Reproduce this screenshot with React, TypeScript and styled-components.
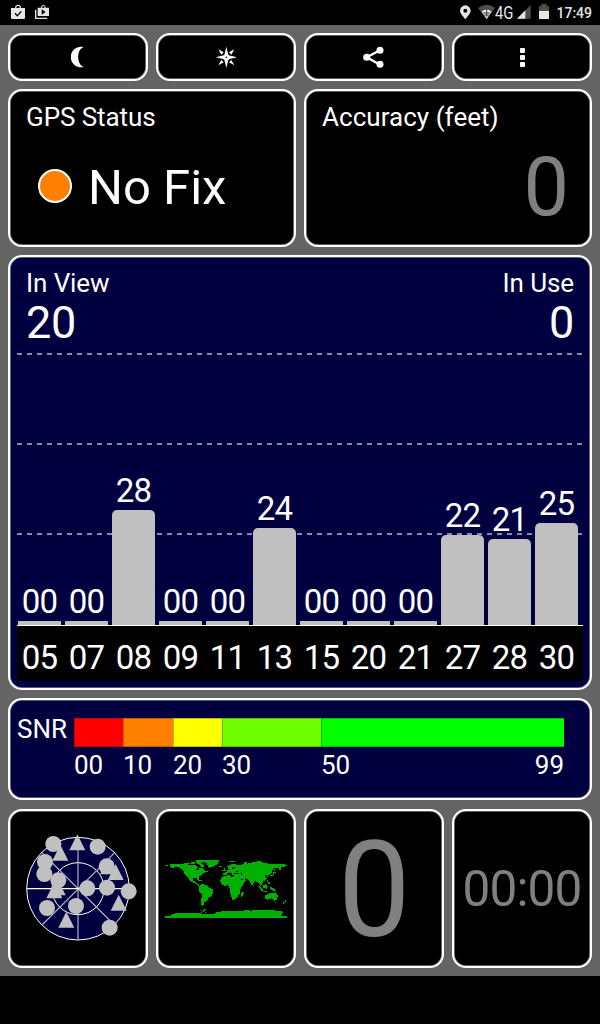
import React from "react";
import styled, { createGlobalStyle } from "styled-components";

const GlobalStyle = createGlobalStyle`
  * { box-sizing: border-box; }
  body { margin: 0; background: #000; font-family: Roboto, "Liberation Sans", sans-serif; color: #fff; }
`;

const Screen = styled.div`
  width: 600px;
  height: 1024px;
  background: #000;
  display: flex;
  flex-direction: column;
  overflow: hidden;
`;

const StatusBar = styled.header`
  height: 25px;
  flex: none;
  display: flex;
  justify-content: space-between;
  padding: 0 8px 0 11px;
`;

const StatusGroup = styled.div`
  display: flex;
  align-items: center;
`;

const StatusIcon = styled.svg<{ $gap?: number }>`
  display: block;
  flex: none;
  margin-left: ${(p) => p.$gap ?? 0}px;
`;

const Network = styled.span`
  display: block;
  width: 20px;
  font-size: 18.5px;
  line-height: 26px;
  color: #e6e6e6;
  transform: scaleX(0.8);
  transform-origin: left;
`;

const Clock = styled.span`
  margin-left: 7px;
  font-size: 14px;
  font-weight: 500;
  line-height: 25px;
  padding-top: 1px;
  color: #e6e6e6;
`;

const Dashboard = styled.main`
  height: 951px;
  background: #646464;
  padding: 8px;
  display: grid;
  grid-template-columns: repeat(4, 140px);
  grid-template-rows: 48px 158px 435px 102px 159px;
  column-gap: 8px;
  row-gap: 8px;
`;

const Panel = styled.section<{ $span?: number; $navy?: boolean }>`
  grid-column: span ${(p) => p.$span ?? 1};
  background: ${(p) => (p.$navy ? "#000040" : "#000")};
  border: 2px solid #fff;
  border-radius: 14px;
  box-shadow: inset 0 0 0 0.6px #b0b0b0;
  min-width: 0;
`;

const ToolButton = styled(Panel).attrs({ as: "button", type: "button" })`
  padding: 0;
  display: flex;
  align-items: center;
  justify-content: center;
`;

const InfoPanel = styled(Panel)`
  padding: 10px 16px;
`;

const Title = styled.div<{ $spacing?: number }>`
  font-size: 26px;
  line-height: 32px;
  letter-spacing: ${(p) => p.$spacing ?? -0.08}px;
  white-space: nowrap;
`;

const FixRow = styled.div`
  display: flex;
  align-items: center;
  margin: 25px 0 0 12px;
  height: 60px;
`;

const FixDot = styled.span`
  width: 34px;
  height: 34px;
  border: 2px solid #fff;
  border-radius: 50%;
  background: #ff8000;
  margin: -4px 16px 0 0;
`;

const FixText = styled.span`
  font-size: 49px;
  line-height: 60px;
`;

const AccuracyValue = styled.div`
  font-size: 81px;
  line-height: 90px;
  text-align: right;
  color: #808080;
  padding: 10px 5px 0 0;
`;

const ChartPanel = styled(Panel)`
  padding: 10px 7px 0;
`;

const ChartHead = styled.div`
  display: flex;
  justify-content: space-between;
  padding: 0 9px;
  height: 86px;
`;

const Stat = styled.div<{ $right?: boolean }>`
  text-align: ${(p) => (p.$right ? "right" : "left")};
`;

const StatValue = styled.div`
  font-size: 45px;
  line-height: 48px;
  letter-spacing: -0.3px;
`;

const dashes = "repeating-linear-gradient(90deg, #8888a8 0 5px, transparent 5px 10px)";

const Plot = styled.div`
  height: 273px;
  border-bottom: 1px solid #fff;
  display: flex;
  align-items: flex-end;
  gap: 4px;
  padding-left: 1px;
  background: ${dashes} 0 0 / 100% 2px no-repeat,
    ${dashes} 0 90px / 100% 2px no-repeat,
    ${dashes} 0 180px / 100% 2px no-repeat;
`;

const BarColumn = styled.div`
  width: 43px;
  flex: none;
  text-align: center;
  font-size: 33px;
  line-height: 38px;
  letter-spacing: -0.7px;
`;

const BarValue = styled.div`
  margin: 0 -4px;
`;

const Bar = styled.div<{ $empty: boolean }>`
  background: #c0c0c0;
  border-radius: ${(p) => (p.$empty ? "0" : "5px 5px 0 0")};
`;

const Axis = styled.div`
  height: 55px;
  background: #000;
  display: flex;
  gap: 4px;
  padding: 13px 0 0 1px;
`;

const SnrPanel = styled(Panel)`
  display: flex;
  padding: 18px 0 0 7px;
`;

const SnrLabel = styled.div`
  width: 57px;
  font-size: 26px;
  line-height: 23px;
`;

const SnrScale = styled.div`
  display: grid;
  grid-template-columns: 49px 50px 49px 99px 243px;
  align-content: start;
`;

const Swatch = styled.div<{ $color: string }>`
  height: 29px;
  background: ${(p) => p.$color};
  border: solid rgba(0, 0, 0, 0.25);
  border-width: 1px 0 1px 1px;
`;

const Tick = styled.div`
  display: flex;
  justify-content: space-between;
  font-size: 26px;
  line-height: 36px;
  white-space: nowrap;
`;

const Tile = styled(Panel)`
  height: 159px;
  margin-top: 1px;
  display: flex;
  align-items: center;
  justify-content: center;
`;

const SpeedValue = styled.div`
  font-size: 133px;
  line-height: 1;
  color: #808080;
  padding: 4px 0 0 1px;
  transform: scaleX(0.97);
`;

const TimeValue = styled.div`
  font-size: 49.5px;
  line-height: 1;
  letter-spacing: -0.9px;
  color: #808080;
  padding-top: 3px;
`;

const satellites = [
  { prn: "05", snr: "00", height: 4 },
  { prn: "07", snr: "00", height: 4 },
  { prn: "08", snr: "28", height: 115 },
  { prn: "09", snr: "00", height: 4 },
  { prn: "11", snr: "00", height: 4 },
  { prn: "13", snr: "24", height: 97 },
  { prn: "15", snr: "00", height: 4 },
  { prn: "20", snr: "00", height: 4 },
  { prn: "21", snr: "00", height: 4 },
  { prn: "27", snr: "22", height: 90 },
  { prn: "28", snr: "21", height: 86 },
  { prn: "30", snr: "25", height: 102 },
];

const snrBands = [
  { color: "#ff0000", ticks: ["00"] },
  { color: "#ff8000", ticks: ["10"] },
  { color: "#ffff00", ticks: ["20"] },
  { color: "#70ff00", ticks: ["30"] },
  { color: "#00ff00", ticks: ["50", "99"] },
];

const skyCircles = [
  [130, 71], [263, 79], [105, 125], [103, 161], [145, 180], [290, 138],
  [232, 204], [291, 202], [356, 213], [111, 263], [198, 257], [299, 322],
];

const skyTriangles = [
  [202, 66], [151, 97], [294, 138], [317, 155], [133, 210], [143, 201], [326, 247], [169, 298],
];

function SkyPlot() {
  return (
    <svg width="130" height="120" viewBox="9 26 390 360">
      <circle cx="204" cy="205" r="154" fill="#000040" stroke="#fff" strokeWidth="3" />
      <circle cx="204" cy="205" r="78" fill="none" stroke="#fff" strokeWidth="3" />
      <g stroke="#b4b4c8" strokeWidth="3.5">
        <path d="M204 51V359M96 314L314 97M96 97L313 314" />
        <path d="M50 205H358" stroke="#fff" />
      </g>
      <g fill="#c0c0c0">
        {skyCircles.map(([x, y]) => <circle key={`${x}-${y}`} cx={x} cy={y} r="24" />)}
        {skyTriangles.map(([x, y]) => (
          <path key={`${x}-${y}`} d={`M${x} ${y - 24}L${x + 24} ${y + 24}H${x - 24}Z`} />
        ))}
      </g>
    </svg>
  );
}

function WorldMap() {
  return (
    <svg width="122" height="61" viewBox="27 54 366 183" fill="#00b000" shapeRendering="crispEdges">
      <path d="M42 73H78L84 70H92L98 74H112L120 77L126 82L120 88L127 92L131 84H141L146 91L156 95L144 98L138 105L130 109L128 119H124L120 113L111 114L109 121L116 124L121 130L130 134L128 137L119 132L107 126L100 120L95 110L86 104L84 95L78 87L68 82L57 81L48 85L43 82Z" />
      <path d="M132 134L141 132L151 136L158 143L173 149L171 157L167 168L159 173L154 180L148 185L143 190L142 199L136 196L135 186L138 165L130 154L128 147Z" />
      <path d="M138 59H188V66L184 74L169 80L160 84L155 77L152 69L144 66H138Z" />
      <path d="M119 61H139V68H132L145 77L142 81L132 79V75L122 69ZM90 69H101V73H90ZM104 67H116V72H104ZM27 75H36V78H27ZM189 77H198V81H189ZM150 93H157V97H150ZM126 121H138V124H126ZM222 63H237V66H222ZM265 67H274V71H265Z" />
      <path d="M204 84H208V89H210V94H203V90H205ZM199 89H203V94H199ZM216 86L214 79L219 76L230 71L240 73L248 76L260 73L278 70L290 67L305 64L314 64L324 69L340 71L360 72L380 73L393 74V79L382 80L375 83L376 91L371 91L368 83L358 84L350 88L348 96L342 103L337 105L334 111L330 103L326 108L333 114L330 121L321 124L318 132L313 138L309 129L304 125L297 124L291 132L289 137L284 130L278 120L271 116L266 115L270 121L263 129L256 132L248 116L246 110H235L233 104L225 103L222 97L213 99L211 106H202V98L212 97L214 91L221 88L231 87L239 82L236 79L229 87L221 88Z" />
      <path d="M204 108L221 105L225 111L232 109L246 112L252 123L260 130H264L258 140L252 148L251 160L246 169L239 178L229 179L226 170L222 158L223 148L217 136L205 137L197 132L193 125L194 118Z" />
      <path d="M260 155H263V162L258 171H255V162ZM327 166L336 162L342 158L352 158L353 162L358 156L365 167L364 178L356 183L346 175L335 179L327 177ZM356 186H361V189H356ZM387 179H391V184L384 191H381V187H386ZM340 140L350 143L358 149L360 154L350 151L344 147ZM321 136L330 132L333 137L330 145L322 144ZM306 136H310L320 148V152H316ZM320 152H333V155H320ZM333 138H337V142H334V148H331V140ZM334 120H337V127H341V133H337V126H334ZM351 96H359V99H355V104L348 109H341V106H348L352 101ZM353 87H356V94H353ZM290 134H293V138H290ZM122 112H126V115H122Z" />
      <path d="M27 228H45V225L60 219H134L140 223H150L175 221L184 215L225 213H255L270 210H280L284 213L291 210H345L376 214L380 218L375 227L393 229V234H27ZM134 210H139V213H134ZM140 212L145 208H149V211L144 215H138V218H134V215H140ZM146 216H150V219H146Z" />
      <g fill="#000">
        <path d="M214 102H218V106H214ZM226 98H229V103H226ZM235 99H248V102H235ZM255 97H259V104H255ZM256 118H262V120H256ZM245 116H247V122H245ZM228 80H231V86H228ZM239 93H245V95H239Z" />
      </g>
    </svg>
  );
}

function CompassIcon() {
  return (
    <svg width="22" height="22" viewBox="-34 -34 66 66" fill="#fff">
      <path d="M0-32L6-7L9-9L7-6L32 0L7 6L9 9L6 7L0 32L-6 7L-9 9L-7 6L-32 0L-7-6L-9-9L-6-7Z" />
      <path d="M-24-24L-8-15L-15-8ZM24-24L8-15L15-8ZM-24 24L-8 15L-15 8ZM24 24L8 15L15 8Z" />
      <circle r="2.5" fill="#000" />
    </svg>
  );
}

export default function App() {
  return (
    <Screen>
      <GlobalStyle />
      <StatusBar>
        <StatusGroup>
          <StatusIcon width="14" height="25" viewBox="0 0 42 75">
            <path d="M0 24H12C12 11 30 11 30 24H42V53Q42 57 38 57H4Q0 57 0 53ZM16 24H26C26 16 16 16 16 24Z" fill="#e6e6e6" fillRule="evenodd" />
            <path d="M12 40L19 47L31 34" fill="none" stroke="#000" strokeWidth="4" />
          </StatusIcon>
          <StatusIcon $gap={10} width="14" height="25" viewBox="0 0 42 75">
            <path d="M8 23H18C18 12 32 12 32 23H42V48H8ZM21 23H29C29 16 21 16 21 23ZM20 28V44L32 36Z" fill="#e6e6e6" fillRule="evenodd" />
            <path d="M2 30V55H36" fill="none" stroke="#e6e6e6" strokeWidth="4" />
          </StatusIcon>
        </StatusGroup>
        <StatusGroup>
          <StatusIcon width="11" height="25" viewBox="0 0 33 75">
            <path d="M16 58C9 48 0 40 0 32A16 16 0 0 1 32 32C32 40 23 48 16 58ZM16 26A6 6 0 1 0 16 38A6 6 0 1 0 16 26Z" fill="#e6e6e6" fillRule="evenodd" />
          </StatusIcon>
          <StatusIcon $gap={7} width="17" height="25" viewBox="0 0 51 75">
            <path d="M0 24Q26 4 51 24L26 57Z" fill="#4d4d4d" />
            <path d="M10 35Q26 22 41 35L26 57Z" fill="#e6e6e6" />
            <path d="M14 39H37M18 45H33M26 27V50" stroke="#000" strokeWidth="2" />
          </StatusIcon>
          <Network>4G</Network>
          <StatusIcon $gap={2} width="14" height="25" viewBox="0 0 42 75">
            <path d="M41 15V56H0Z" fill="#4d4d4d" />
            <path d="M25 31V56H0Z" fill="#e6e6e6" />
          </StatusIcon>
          <StatusIcon $gap={8} width="10" height="25" viewBox="0 0 30 75">
            <path d="M0 17H8V12H22V17H30V57H0Z" fill="#4d4d4d" />
            <path d="M0 33H30V57H0Z" fill="#e6e6e6" />
          </StatusIcon>
          <Clock>17:49</Clock>
        </StatusGroup>
      </StatusBar>

      <Dashboard>
        <ToolButton aria-label="Night mode">
          <svg width="14" height="22" viewBox="-2 0 42 66" fill="#fff">
            <path d="M36 3A31 31 0 1 0 36 63C14 55 14 11 36 3Z" />
          </svg>
        </ToolButton>
        <ToolButton aria-label="Compass"><CompassIcon /></ToolButton>
        <ToolButton aria-label="Share">
          <svg width="22" height="22" viewBox="1 -1 66 66" fill="#fff">
            <path d="M52 12L12 33L52 55" fill="none" stroke="#fff" strokeWidth="7" />
            <circle cx="12" cy="33" r="10.5" /><circle cx="52" cy="12" r="10.5" /><circle cx="52" cy="54" r="10.5" />
          </svg>
        </ToolButton>
        <ToolButton aria-label="Menu">
          <svg width="5" height="19" viewBox="0 0 5 19" fill="#fff">
            <rect width="5" height="5" rx="1" /><rect y="7" width="5" height="5" rx="1" /><rect y="14" width="5" height="5" rx="1" />
          </svg>
        </ToolButton>

        <InfoPanel $span={2}>
          <Title>GPS Status</Title>
          <FixRow><FixDot /><FixText>No Fix</FixText></FixRow>
        </InfoPanel>
        <InfoPanel $span={2}>
          <Title $spacing={0.04}>Accuracy (feet)</Title>
          <AccuracyValue>0</AccuracyValue>
        </InfoPanel>

        <ChartPanel $span={4} $navy>
          <ChartHead>
            <Stat><Title>In View</Title><StatValue>20</StatValue></Stat>
            <Stat $right><Title>In Use</Title><StatValue>0</StatValue></Stat>
          </ChartHead>
          <Plot>
            {satellites.map((s) => (
              <BarColumn key={s.prn}>
                <BarValue>{s.snr}</BarValue>
                <Bar $empty={s.snr === "00"} style={{ height: s.height }} />
              </BarColumn>
            ))}
          </Plot>
          <Axis>
            {satellites.map((s) => <BarColumn key={s.prn}>{s.prn}</BarColumn>)}
          </Axis>
        </ChartPanel>

        <SnrPanel $span={4} $navy>
          <SnrLabel>SNR</SnrLabel>
          <SnrScale>
            {snrBands.map((b) => <Swatch key={b.color} $color={b.color} />)}
            {snrBands.map((b) => (
              <Tick key={b.color}>{b.ticks.map((t) => <span key={t}>{t}</span>)}</Tick>
            ))}
          </SnrScale>
        </SnrPanel>

        <Tile><SkyPlot /></Tile>
        <Tile><WorldMap /></Tile>
        <Tile><SpeedValue>0</SpeedValue></Tile>
        <Tile><TimeValue>00:00</TimeValue></Tile>
      </Dashboard>
    </Screen>
  );
}
